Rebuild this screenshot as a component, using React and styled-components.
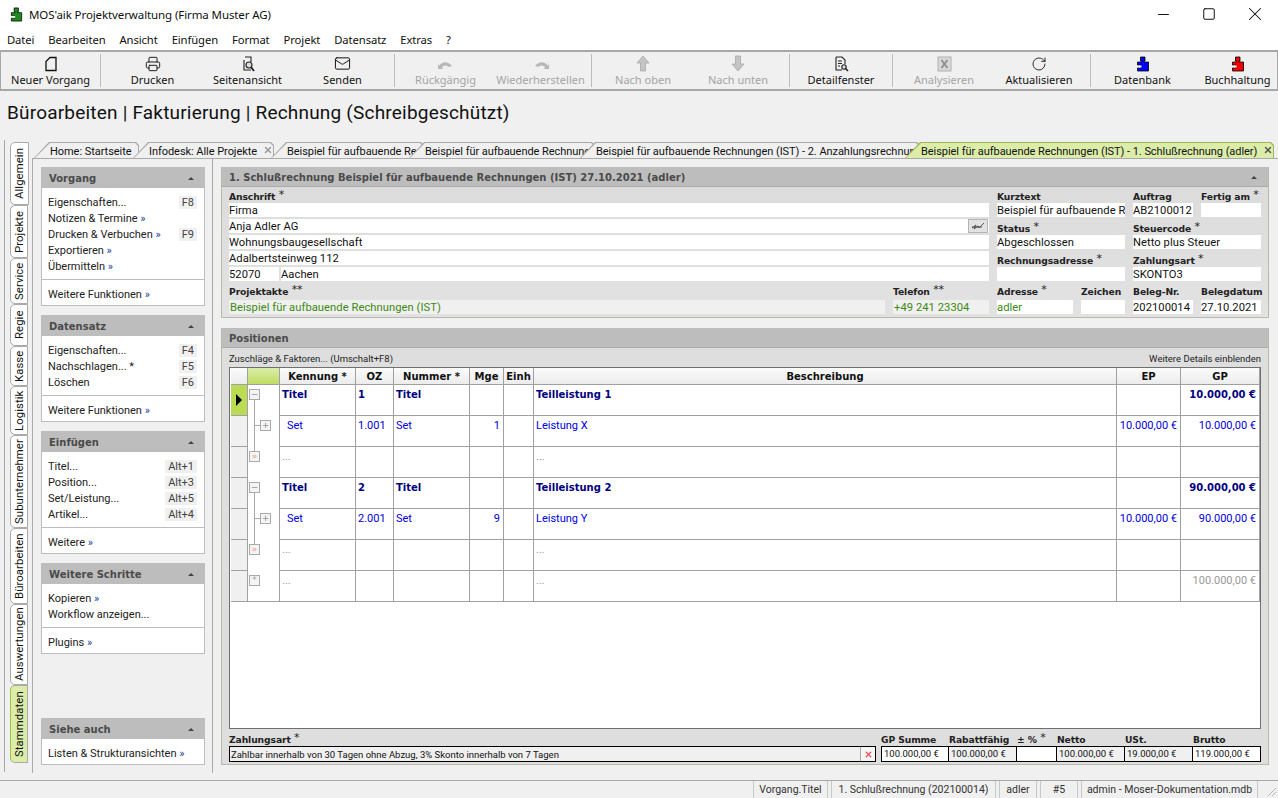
import React from "react";
import styled, { createGlobalStyle } from "styled-components";
import { Minus, Square, X, RotateCw, Mail, Printer } from "lucide-react";

const Global = createGlobalStyle`
  html, body { margin: 0; padding: 0; background: #f0f0f0; }
  body { font-family: "Noto Sans", "Open Sans", sans-serif; font-size: 11px; color: #111; overflow: hidden; }
  * { box-sizing: border-box; }
`;

const sansUi = `"Noto Sans", "Open Sans", sans-serif`;
const tahoma = `"Roboto", "Noto Sans", sans-serif`;
const tahomaBold = `"DejaVu Sans", sans-serif`;

// Window frame
const Page = styled.div`
  width: 1278px;
  height: 798px;
  display: flex;
  flex-direction: column;
  background: #f0f0f0;
`;

const TitleBar = styled.div`
  height: 30px;
  background: #fff;
  display: flex;
  align-items: center;
  padding: 0 0 2px 9px;
  font-family: ${sansUi};
  font-size: 11.5px;
`;

const TitleText = styled.span`
  margin-left: 5px;
  flex: 1;
  letter-spacing: -0.1px;
`;

const WinButtons = styled.div`
  display: flex;
  color: #111;
`;

const WinButton = styled.div`
  width: 46px;
  height: 28px;
  display: flex;
  align-items: center;
  justify-content: center;
`;

const MenuBar = styled.div`
  height: 20px;
  background: #fff;
  display: flex;
  gap: 14px;
  padding: 0 0 2px 7px;
  align-items: center;
  font-size: 11.25px;
  letter-spacing: -0.1px;
`;

// Toolbar
const Toolbar = styled.div`
  height: 41px;
  border: 1px solid #a8a8a8;
  border-width: 2px 1px 2px 1px;
  background: #f0f0f0;
  display: flex;
  align-items: stretch;
  padding: 2px 0;
`;

const ToolGroup = styled.div`
  display: flex;
  justify-content: center;
  width: ${(p) => p.$w}px;
  flex: none;
  padding-left: ${(p) => (p.$last ? "12px" : "0")};
  border-right: ${(p) => (p.$last ? "none" : "1px solid #bdbdbd")};
`;

const ToolButton = styled.div`
  width: 95px;
  flex: none;
  display: flex;
  flex-direction: column;
  align-items: center;
  justify-content: space-between;
  font-size: 11px;
  line-height: 15px;
  white-space: nowrap;
  color: ${(p) => (p.$off ? "#a4a4a4" : "#111")};
  padding-top: 1px;
`;

const ToolIcon = styled.div`
  height: 17px;
  display: flex;
  align-items: center;
`;

const PageHeading = styled.h1`
  margin: 0;
  height: 41px;
  padding-left: 7px;
  padding-top: 9px;
  font-family: ${tahoma};
  font-size: 19px;
  line-height: 26px;
  font-weight: 400;
  letter-spacing: 0.2px;
`;

const Workspace = styled.div`
  flex: 1;
  display: flex;
  min-height: 0;
`;

const LeftFrame = styled.div`
  width: 5px;
  flex: none;
  height: 632px;
  margin-top: 8px;
  border-right: 1px solid #a8a8a8;
`;

// Vertical module tabs
const SideTabs = styled.div`
  width: 23px;
  margin-left: 4px;
  padding-top: 10px;
  display: flex;
  flex-direction: column;
  flex: none;
`;

const SideTab = styled.div`
  height: ${(p) => p.$h}px;
  width: ${(p) => (p.$first ? "19px" : "18px")};
  margin-left: 1px;
  writing-mode: vertical-rl;
  transform: rotate(180deg);
  text-align: center;
  font-family: ${tahoma};
  font-size: 11.3px;
  line-height: 17px;
  letter-spacing: 0.1px;
  color: #111;
  background: ${(p) => (p.$active ? "#dcedaa" : "#fff")};
  border: 1px solid #aaa;
  border-right-color: ${(p) => (p.$active ? "#a3c243" : "#aaa")};
  border-radius: 0 5px 5px 0;
`;

const Stage = styled.div`
  flex: 1;
  display: flex;
  flex-direction: column;
  min-width: 0;
  padding-top: 10px;
`;

// Document tabs
const DocTabs = styled.div`
  height: 16px;
  flex: none;
  display: flex;
  padding-left: 2px;
`;

const DocTab = styled.div`
  width: ${(p) => p.$w}px;
  margin-right: ${(p) => p.$step - p.$w}px;
  flex: none;
  height: 16px;
  position: relative;
  padding-left: 16px;
  display: flex;
  align-items: center;
  justify-content: space-between;
  overflow: hidden;
  white-space: nowrap;
  font-family: ${tahoma};
  font-size: 11px;
  background: ${(p) => (p.$active ? "#9fb657" : "#aaa")};
  clip-path: polygon(15px 0, calc(100% - 3px) 0, 100% 3px, 100% 100%, 0 100%);
  &::before {
    content: "";
    position: absolute;
    inset: 1px 1px 0 1px;
    background: ${(p) => (p.$active ? "#dcedaa" : "#f0f0f0")};
    clip-path: polygon(15px 0, calc(100% - 3px) 0, 100% 3px, 100% 100%, 0 100%);
  }
`;

const DocTabLabel = styled.span`
  position: relative;
  padding-top: 3px;
  letter-spacing: -0.05px;
`;

const DocTabClose = styled.span`
  position: relative;
  display: flex;
  margin-right: 1px;
  color: ${(p) => (p.$active ? "#555" : "#999")};
`;

const StagePanel = styled.div`
  flex: none;
  height: 615px;
  display: flex;
  border-left: 1px solid #aaa;
  border-top: 1px solid #aaa;
`;

// Left task panels
const Sidebar = styled.div`
  width: 180px;
  flex: none;
  padding: 8px 7px 0 8px;
  border-right: 1px solid #aaa;
  display: flex;
  flex-direction: column;
`;

const TaskPanel = styled.section`
  margin-bottom: ${(p) => p.$gap || 9}px;
`;

const PanelHead = styled.div`
  height: 21px;
  background: #bdbdbd;
  display: flex;
  align-items: center;
  justify-content: space-between;
  padding: 2px 11px 0 8px;
  font-family: ${tahomaBold};
  font-weight: 700;
  font-size: 10px;
  color: #4a4a4a;
`;

const Caret = styled.span`
  width: 0;
  height: 0;
  border-left: 3px solid transparent;
  border-right: 3px solid transparent;
  border-bottom: 3px solid #444;
`;

const PanelBody = styled.div`
  background: #fff;
  border: 1px solid #bdbdbd;
  border-top: none;
`;

const PanelGroup = styled.div`
  padding: ${(p) => (p.$foot ? "6px 7px 3px 6px" : "6px 7px 5px 6px")};
  & + & {
    border-top: 1px solid #bdbdbd;
  }
`;

const TaskRow = styled.div`
  height: 16px;
  padding-top: 1px;
  line-height: 15px;
  display: flex;
  justify-content: space-between;
  align-items: center;
  font-family: ${tahoma};
  font-size: 11px;
  color: #222;
`;

const Key = styled.span`
  background: #f0f0f0;
  padding: 0 3px;
  margin-top: -1px;
  height: 13px;
  line-height: 14px;
  color: #444;
  font-size: 11px;
`;

const Raquo = styled.span`
  color: #1c3f94;
`;

const Spacer = styled.div`
  flex: 1;
`;

// Main column
const MainCol = styled.div`
  flex: 1;
  min-width: 0;
  padding: 8px 9px 0 8px;
  display: flex;
  flex-direction: column;
`;

const Section = styled.section`
  background: #dedede;
  display: flex;
  flex-direction: column;
  flex: ${(p) => (p.$grow ? 1 : "none")};
  height: ${(p) => (p.$h ? p.$h + "px" : "auto")};
  margin-bottom: ${(p) => p.$mb || 0}px;
  border: solid #b8b8b0;
  border-width: 0 1px 1px 1px;
`;

const SectionHead = styled.div`
  height: 20px;
  flex: none;
  background: #bdbdbd;
  border-bottom: 1px solid #aaa;
  display: flex;
  align-items: center;
  justify-content: space-between;
  padding: 2px 11px 0 7px;
  font-family: ${tahomaBold};
  font-weight: 700;
  font-size: 10px;
  color: #4a4a4a;
`;

// Form
const FormBody = styled.div`
  padding: 4px 7px 0 7px;
  display: grid;
  grid-template-columns: 760px 128px 128px;
  grid-template-rows: 92px auto;
  column-gap: 8px;
  background: linear-gradient(#dcdcdc, #e2e2e2);
  flex: 1;
`;

const FieldLabel = styled.div`
  height: 12px;
  line-height: 11px;
  font-family: ${tahomaBold};
  font-weight: 700;
  font-size: 9.2px;
  letter-spacing: -0.1px;
  white-space: nowrap;
  color: #222;
`;

const Star = styled.span`
  font-weight: 400;
  font-size: 11px;
  line-height: 0;
  position: relative;
  top: -2px;
`;

const Input = styled.div`
  height: 14px;
  line-height: 15px;
  background: ${(p) => (p.$ro ? "#f0f0f0" : "#fff")};
  font-family: ${tahoma};
  font-size: 11.2px;
  letter-spacing: 0.05px;
  padding-left: ${(p) => (p.$ro ? "1px" : "0")};
  color: ${(p) => (p.$green ? "#3c8a10" : "#111")};
  white-space: nowrap;
  overflow: hidden;
  position: relative;
`;

const Stack = styled.div`
  display: flex;
  flex-direction: column;
  & > div:not(:first-child) {
    margin-bottom: 2px;
  }
`;

const FieldStack = styled.div`
  display: flex;
  flex-direction: column;
  gap: 6px;
`;

const TopPair = styled.div`
  display: grid;
  grid-template-columns: 60px 60px;
  column-gap: 8px;
`;

const CityRow = styled.div`
  display: flex;
  gap: 2px;
`;

const Zip = styled(Input)`
  width: 50px;
`;

const City = styled(Input)`
  flex: 1;
`;

const PickButton = styled.span`
  position: absolute;
  right: 1px;
  top: 0;
  width: 20px;
  height: 14px;
  background: #e2e2e2;
  border: 1px solid #b4b4b4;
  display: flex;
  align-items: center;
  justify-content: center;
`;

const FormFoot = styled.div`
  grid-column: 1 / -1;
  display: grid;
  grid-template-columns: 656px 96px 76px 44px 60px 60px;
  column-gap: 8px;
  margin-top: 3px;
  align-content: start;
`;

const FootField = styled.div`
  display: flex;
  flex-direction: column;
  gap: 2px;
`;

// Positions
const PositionsBar = styled.div`
  height: 19px;
  display: flex;
  align-items: center;
  justify-content: space-between;
  padding: 2px 7px 0;
  font-family: ${tahoma};
  font-size: 9.5px;
  color: #222;
  flex: none;
`;

const GridFrame = styled.div`
  margin: 0 7px;
  flex: 1;
  background: #fff;
  border: 1px solid #707070;
  min-height: 0;
  padding-left: 1px;
  overflow: hidden;
`;

const Table = styled.table`
  border-collapse: separate;
  border-spacing: 0;
  table-layout: fixed;
  width: 1029px;
  font-family: ${tahoma};
  font-size: 11px;
`;

const Th = styled.th`
  height: 17px;
  padding: 0;
  font-family: ${tahomaBold};
  font-size: 10px;
  font-weight: 700;
  background: ${(p) => (p.$green ? "linear-gradient(#dcedaa, #bfdc62)" : "linear-gradient(#fbfbfb, #ececec)")};
  border-right: 1px solid #a0a0a0;
  border-bottom: 1px solid #a0a0a0;
  color: #111;
`;

const Td = styled.td`
  height: 31px;
  padding: 2px 3px 0 ${(p) => (p.$indent ? "7px" : "2px")};
  vertical-align: top;
  border-right: 1px solid #a0a0a0;
  border-bottom: 1px solid #a0a0a0;
  line-height: 15px;
  text-align: ${(p) => (p.$right ? "right" : "left")};
  color: ${(p) => p.$color || "#0000e0"};
  font-family: ${(p) => (p.$bold ? tahomaBold : "inherit")};
  font-weight: ${(p) => (p.$bold ? 700 : 400)};
  font-size: ${(p) => (p.$bold ? "10px" : "11px")};
  white-space: nowrap;
  overflow: hidden;
`;

const SelectCell = styled.td`
  padding: 0;
  border-right: 1px solid #a0a0a0;
  border-bottom: 1px solid #a0a0a0;
  background: ${(p) => (p.$current ? "#bcdb55" : "#f0f0f0")};
  text-align: center;
  vertical-align: top;
`;

const Pointer = styled.span`
  display: inline-block;
  margin-top: 9px;
  border-left: 6px solid #000;
  border-top: 6px solid transparent;
  border-bottom: 6px solid transparent;
`;

const TreeCell = styled.td`
  padding: 0;
  position: relative;
  border-right: 1px solid #a0a0a0;
  border-bottom: ${(p) => (p.$last ? "1px solid #a0a0a0" : "none")};
  background: #fff;
`;

const TreeLine = styled.span`
  position: absolute;
  left: ${(p) => p.$x}px;
  top: ${(p) => p.$y}px;
  width: ${(p) => p.$w || 1}px;
  height: ${(p) => p.$h || 1}px;
  background: #aaa;
`;

const TreeBox = styled.span`
  position: absolute;
  left: ${(p) => p.$x}px;
  top: 4px;
  width: 11px;
  height: 11px;
  background: #f4f4f4;
  border: 1px solid #aaa;
  font-size: 9px;
  line-height: 8px;
  text-align: center;
  color: ${(p) => p.$c || "#999"};
  font-family: ${tahomaBold};
`;

// Totals
const TotalsRow = styled.div`
  flex: none;
  height: 35px;
  padding: 5px 7px 0;
  display: grid;
  grid-template-columns: 647px 1fr;
  column-gap: 5px;
`;

const PayBox = styled.div`
  height: 16px;
  border: 1px solid #000;
  background: #f0f0f0;
  display: flex;
  align-items: center;
  font-family: ${tahoma};
  font-size: 9.5px;
  padding-left: 1px;
`;

const PayText = styled.span`
  flex: 1;
`;

const PayClear = styled.span`
  width: 15px;
  height: 14px;
  background: #f6f6f6;
  border-left: 1px solid #aaa;
  display: flex;
  align-items: center;
  justify-content: center;
  color: #e8505a;
`;

const TotalsGrid = styled.div`
  display: grid;
  grid-template-columns: 68px 68px 40px 68px 68px 68px;
`;

const TotalCell = styled.div`
  height: 16px;
  border: 1px solid #000;
  border-left-width: ${(p) => (p.$first ? "1px" : "0")};
  background: ${(p) => (p.$ro ? "#f0f0f0" : "#fff")};
  font-family: ${tahoma};
  font-size: 9.5px;
  line-height: 14px;
  padding-left: 2px;
  white-space: nowrap;
`;

// Status bar
const StatusBar = styled.div`
  height: 18px;
  flex: none;
  border-top: 1px solid #a8a8a8;
  display: flex;
  justify-content: flex-end;
  gap: 3px;
  padding-right: 20px;
  position: relative;
`;

const StatusCell = styled.div`
  width: ${(p) => p.$w}px;
  border: solid #c8c8c8;
  border-width: 0 1px;
  text-align: center;
  line-height: 17px;
  color: #333;
  font-family: ${tahoma};
  font-size: 10.5px;
  white-space: nowrap;
`;

const Grip = styled.svg`
  position: absolute;
  right: 1px;
  bottom: 1px;
`;

// Puzzle figure used as app logo and for the data toolbar buttons
const Puzzle = ({ color, size = 16 }) => (
  <svg width={size} height={size} viewBox="0 0 16 16">
    <path
      d="M5.5 1h4.5v4H9v1h4.5v9h-11v-3h3V9h-3V6h4V5h-1z"
      fill={color}
      stroke="#000"
      strokeWidth="0.8"
    />
    <rect x="4" y="9.5" width="2.5" height="2" fill="#fff" />
  </svg>
);

const PageIcon = () => (
  <svg width="14" height="16" viewBox="0 0 14 16" fill="none" stroke="#111" strokeWidth="1.3">
    <path d="M6 1.5h6v13H2V5.5z" />
  </svg>
);

const PreviewIcon = () => (
  <svg width="14" height="16" viewBox="0 0 14 16" fill="none" stroke="#222" strokeWidth="1.1">
    <path d="M4 1h6v5M3 4v10h7" />
    <circle cx="8" cy="9" r="3" fill="#ddd" />
    <path d="M10 11l3 4" strokeWidth="1.8" />
  </svg>
);

const UndoIcon = ({ flip }) => (
  <svg width="20" height="12" viewBox="0 0 20 12" style={flip ? { transform: "scaleX(-1)" } : undefined}>
    <path d="M3 8c3-5 9-5 13 0l-3 1c-3-2-5-2-7 0l1 2H2V5z" fill="#b8b8b8" />
  </svg>
);

const ArrowIcon = ({ down }) => (
  <svg width="14" height="17" viewBox="0 0 14 17" style={down ? { transform: "scaleY(-1)" } : undefined}>
    <path d="M7 1l6 7H9.5v8h-5V8H1z" fill="#c4c4c4" stroke="#aaa" strokeWidth="0.8" />
  </svg>
);

const DetailIcon = () => (
  <svg width="15" height="16" viewBox="0 0 15 16" fill="none" stroke="#222" strokeWidth="1.1">
    <path d="M2 1h6l3 3v4M2 1v13h6" />
    <path d="M4 5h4M4 7.5h4M4 10h2" strokeWidth="1" />
    <circle cx="10" cy="11" r="2.2" fill="#ddd" />
    <path d="M11.5 12.5l2.5 2.5" strokeWidth="1.6" />
  </svg>
);

const ExcelIcon = () => (
  <svg width="15" height="16" viewBox="0 0 15 16">
    <rect x="1" y="1" width="13" height="14" fill="#d8d8d8" stroke="#b0b0b0" />
    <path d="M4.5 4l6 8M10.5 4l-6 8" stroke="#8e8e8e" strokeWidth="1.8" />
  </svg>
);

const SignIcon = () => (
  <svg width="14" height="9" viewBox="0 0 14 9" fill="none" stroke="#444" strokeWidth="0.9">
    <path d="M1 6l4-3-2 4 4-3 1 2 5-5" />
    <path d="M1 5h10" />
  </svg>
);

const Req = ({ n = 1 }) => <Star> {"*".repeat(n)}</Star>;
const More = () => <Raquo> »</Raquo>;

const toolGroups = [
  { w: 100, tools: [{ label: "Neuer Vorgang", icon: <PageIcon /> }] },
  {
    w: 294,
    tools: [
      { label: "Drucken", icon: <Printer size={16} strokeWidth={1.4} /> },
      { label: "Seitenansicht", icon: <PreviewIcon /> },
      { label: "Senden", icon: <Mail size={17} strokeWidth={1.4} /> },
    ],
  },
  {
    w: 197,
    tools: [
      { label: "Rückgängig", icon: <UndoIcon />, off: true },
      { label: "Wiederherstellen", icon: <UndoIcon flip />, off: true },
    ],
  },
  {
    w: 198,
    tools: [
      { label: "Nach oben", icon: <ArrowIcon />, off: true },
      { label: "Nach unten", icon: <ArrowIcon down />, off: true },
    ],
  },
  { w: 103, tools: [{ label: "Detailfenster", icon: <DetailIcon /> }] },
  {
    w: 198,
    tools: [
      { label: "Analysieren", icon: <ExcelIcon />, off: true },
      { label: "Aktualisieren", icon: <RotateCw size={16} strokeWidth={1.3} /> },
    ],
  },
  {
    w: 186,
    last: true,
    tools: [
      { label: "Datenbank", icon: <Puzzle color="#0000f0" /> },
      { label: "Buchhaltung", icon: <Puzzle color="#f00000" /> },
    ],
  },
];

const sideTabs = [
  ["Allgemein", 63],
  ["Projekte", 53],
  ["Service", 46],
  ["Regie", 42],
  ["Kasse", 40],
  ["Logistik", 49],
  ["Subunternehmer", 93],
  ["Büroarbeiten", 76],
  ["Auswertungen", 81],
  ["Stammdaten", 78],
];

const docTabs = [
  { label: "Home: Startseite", w: 105, step: 99 },
  { label: "Infodesk: Alle Projekte", w: 141, step: 138, close: true },
  { label: "Beispiel für aufbauende Rechnungen (IST)", w: 153, step: 138 },
  { label: "Beispiel für aufbauende Rechnungen (IST)", w: 186, step: 171 },
  { label: "Beispiel für aufbauende Rechnungen (IST) - 2. Anzahlungsrechnung", w: 340, step: 325 },
  { label: "Beispiel für aufbauende Rechnungen (IST) - 1. Schlußrechnung (adler)", w: 369, step: 369, close: true, active: true },
];

const columns = [17, 32, 76, 38, 76, 34, 30, 583, 64, 79];

const rows = [
  { kind: "title", cells: ["Titel", "1", "Titel", "", "", "Teilleistung 1", "", "10.000,00 €"] },
  { kind: "set", cells: ["Set", "1.001", "Set", "1", "", "Leistung X", "10.000,00 €", "10.000,00 €"] },
  { kind: "more", cells: ["...", "", "", "", "", "...", "", ""] },
  { kind: "title", cells: ["Titel", "2", "Titel", "", "", "Teilleistung 2", "", "90.000,00 €"] },
  { kind: "set", cells: ["Set", "2.001", "Set", "9", "", "Leistung Y", "10.000,00 €", "90.000,00 €"] },
  { kind: "more", cells: ["...", "", "", "", "", "...", "", ""] },
  { kind: "sum", cells: ["...", "", "", "", "", "...", "", "100.000,00 €"] },
];

const Tree = ({ kind }) => (
  <TreeCell $last={kind === "sum"}>
    {kind === "title" && (
      <>
        <TreeBox $x={1}>−</TreeBox>
        <TreeLine $x={6} $y={15} $h={16} />
      </>
    )}
    {kind === "set" && (
      <>
        <TreeLine $x={6} $y={0} $h={31} />
        <TreeLine $x={6} $y={9} $w={6} />
        <TreeBox $x={12}>+</TreeBox>
      </>
    )}
    {kind === "more" && (
      <>
        <TreeLine $x={6} $y={0} $h={4} />
        <TreeBox $x={1} $c="#e8a080">»</TreeBox>
      </>
    )}
    {kind === "sum" && <TreeBox $x={1} $c="#b09a9a">*</TreeBox>}
  </TreeCell>
);

const cellColor = (kind, i) => {
  if (kind === "title") return "#000080";
  if (kind === "more") return "#b08ac0";
  if (kind === "sum") return i === 7 ? "#999" : "#b08ac0";
  return "#0000e0";
};

const App = () => (
  <Page>
    <Global />
    <TitleBar>
      <Puzzle color="#1e8a1e" size={15} />
      <TitleText>MOS'aik Projektverwaltung (Firma Muster AG)</TitleText>
      <WinButtons>
        <WinButton><Minus size={17} strokeWidth={1.4} /></WinButton>
        <WinButton><Square size={14} strokeWidth={1.7} /></WinButton>
        <WinButton><X size={22} strokeWidth={1.1} /></WinButton>
      </WinButtons>
    </TitleBar>
    <MenuBar>
      {["Datei", "Bearbeiten", "Ansicht", "Einfügen", "Format", "Projekt", "Datensatz", "Extras", "?"].map((m) => (
        <span key={m}>{m}</span>
      ))}
    </MenuBar>
    <Toolbar>
      {toolGroups.map((g, i) => (
        <ToolGroup key={i} $w={g.w} $last={g.last}>
          {g.tools.map((t) => (
            <ToolButton key={t.label} $off={t.off}>
              <ToolIcon>{t.icon}</ToolIcon>
              {t.label}
            </ToolButton>
          ))}
        </ToolGroup>
      ))}
    </Toolbar>
    <PageHeading>Büroarbeiten | Fakturierung | Rechnung (Schreibgeschützt)</PageHeading>
    <Workspace>
      <LeftFrame />
      <SideTabs>
        {sideTabs.map(([label, h], i) => (
          <SideTab key={label} $h={h} $active={label === "Stammdaten"} $first={i === 0}>
            {label}
          </SideTab>
        ))}
      </SideTabs>
      <Stage>
        <DocTabs>
          {docTabs.map((t, i) => (
            <DocTab key={i} $w={t.w} $step={t.step} $active={t.active}>
              <DocTabLabel>{t.label}</DocTabLabel>
              {t.close && (
                <DocTabClose $active={t.active}>
                  <X size={10} strokeWidth={3.5} />
                </DocTabClose>
              )}
            </DocTab>
          ))}
        </DocTabs>
        <StagePanel>
          <Sidebar>
            <TaskPanel>
              <PanelHead>Vorgang<Caret /></PanelHead>
              <PanelBody>
                <PanelGroup>
                  <TaskRow>Eigenschaften...<Key>F8</Key></TaskRow>
                  <TaskRow><span>Notizen &amp; Termine<More /></span></TaskRow>
                  <TaskRow><span>Drucken &amp; Verbuchen<More /></span><Key>F9</Key></TaskRow>
                  <TaskRow><span>Exportieren<More /></span></TaskRow>
                  <TaskRow><span>Übermitteln<More /></span></TaskRow>
                </PanelGroup>
                <PanelGroup $foot>
                  <TaskRow><span>Weitere Funktionen<More /></span></TaskRow>
                </PanelGroup>
              </PanelBody>
            </TaskPanel>
            <TaskPanel>
              <PanelHead>Datensatz<Caret /></PanelHead>
              <PanelBody>
                <PanelGroup>
                  <TaskRow>Eigenschaften...<Key>F4</Key></TaskRow>
                  <TaskRow><span>Nachschlagen... *</span><Key>F5</Key></TaskRow>
                  <TaskRow>Löschen<Key>F6</Key></TaskRow>
                </PanelGroup>
                <PanelGroup $foot>
                  <TaskRow><span>Weitere Funktionen<More /></span></TaskRow>
                </PanelGroup>
              </PanelBody>
            </TaskPanel>
            <TaskPanel>
              <PanelHead>Einfügen<Caret /></PanelHead>
              <PanelBody>
                <PanelGroup>
                  <TaskRow>Titel...<Key>Alt+1</Key></TaskRow>
                  <TaskRow>Position...<Key>Alt+3</Key></TaskRow>
                  <TaskRow>Set/Leistung...<Key>Alt+5</Key></TaskRow>
                  <TaskRow>Artikel...<Key>Alt+4</Key></TaskRow>
                </PanelGroup>
                <PanelGroup $foot>
                  <TaskRow><span>Weitere<More /></span></TaskRow>
                </PanelGroup>
              </PanelBody>
            </TaskPanel>
            <TaskPanel>
              <PanelHead>Weitere Schritte<Caret /></PanelHead>
              <PanelBody>
                <PanelGroup>
                  <TaskRow><span>Kopieren<More /></span></TaskRow>
                  <TaskRow>Workflow anzeigen...</TaskRow>
                </PanelGroup>
                <PanelGroup $foot>
                  <TaskRow><span>Plugins<More /></span></TaskRow>
                </PanelGroup>
              </PanelBody>
            </TaskPanel>
            <Spacer />
            <TaskPanel $gap={8}>
              <PanelHead>Siehe auch<Caret /></PanelHead>
              <PanelBody>
                <PanelGroup $foot>
                  <TaskRow><span>Listen &amp; Strukturansichten<More /></span></TaskRow>
                </PanelGroup>
              </PanelBody>
            </TaskPanel>
          </Sidebar>
          <MainCol>
            <Section $h={151} $mb={10}>
              <SectionHead>
                1. Schlußrechnung Beispiel für aufbauende Rechnungen (IST) 27.10.2021 (adler)
                <Caret />
              </SectionHead>
              <FormBody>
                <Stack>
                  <FieldLabel>Anschrift<Req /></FieldLabel>
                  <Input>Firma</Input>
                  <Input>Anja Adler AG<PickButton><SignIcon /></PickButton></Input>
                  <Input>Wohnungsbaugesellschaft</Input>
                  <Input>Adalbertsteinweg 112</Input>
                  <CityRow><Zip>52070</Zip><City>Aachen</City></CityRow>
                </Stack>
                <FieldStack>
                  <div><FieldLabel>Kurztext</FieldLabel><Input>Beispiel für aufbauende Rechnungen</Input></div>
                  <div><FieldLabel>Status<Req /></FieldLabel><Input>Abgeschlossen</Input></div>
                  <div><FieldLabel>Rechnungsadresse<Req /></FieldLabel><Input /></div>
                </FieldStack>
                <FieldStack>
                  <TopPair>
                    <div><FieldLabel>Auftrag</FieldLabel><Input>AB2100012</Input></div>
                    <div><FieldLabel>Fertig am<Req /></FieldLabel><Input /></div>
                  </TopPair>
                  <div><FieldLabel>Steuercode<Req /></FieldLabel><Input>Netto plus Steuer</Input></div>
                  <div><FieldLabel>Zahlungsart<Req /></FieldLabel><Input>SKONTO3</Input></div>
                </FieldStack>
                <FormFoot>
                  <FootField><FieldLabel>Projektakte<Req n={2} /></FieldLabel><Input $ro $green>Beispiel für aufbauende Rechnungen (IST)</Input></FootField>
                  <FootField><FieldLabel>Telefon<Req n={2} /></FieldLabel><Input $ro $green>+49 241 23304</Input></FootField>
                  <FootField><FieldLabel>Adresse<Req /></FieldLabel><Input $green>adler</Input></FootField>
                  <FootField><FieldLabel>Zeichen</FieldLabel><Input /></FootField>
                  <FootField><FieldLabel>Beleg-Nr.</FieldLabel><Input>202100014</Input></FootField>
                  <FootField><FieldLabel>Belegdatum</FieldLabel><Input>27.10.2021</Input></FootField>
                </FormFoot>
              </FormBody>
            </Section>
            <Section $grow $mb={8}>
              <SectionHead>Positionen</SectionHead>
              <PositionsBar>
                <span>Zuschläge &amp; Faktoren... (Umschalt+F8)</span>
                <span>Weitere Details einblenden</span>
              </PositionsBar>
              <GridFrame>
                <Table>
                  <colgroup>
                    {columns.map((w, i) => <col key={i} width={w} />)}
                  </colgroup>
                  <thead>
                    <tr>
                      <Th />
                      <Th $green />
                      <Th>Kennung *</Th>
                      <Th>OZ</Th>
                      <Th>Nummer *</Th>
                      <Th>Mge</Th>
                      <Th>Einh</Th>
                      <Th>Beschreibung</Th>
                      <Th>EP</Th>
                      <Th>GP</Th>
                    </tr>
                  </thead>
                  <tbody>
                    {rows.map((r, ri) => (
                      <tr key={ri}>
                        <SelectCell $current={ri === 0}>{ri === 0 && <Pointer />}</SelectCell>
                        <Tree kind={r.kind} />
                        {r.cells.map((c, i) => (
                          <Td
                            key={i}
                            $bold={r.kind === "title"}
                            $right={i === 3 || i >= 6}
                            $indent={i === 0 && r.kind === "set"}
                            $color={cellColor(r.kind, i)}
                          >
                            {c}
                          </Td>
                        ))}
                      </tr>
                    ))}
                  </tbody>
                </Table>
              </GridFrame>
              <TotalsRow>
                <div>
                  <FieldLabel>Zahlungsart<Req /></FieldLabel>
                  <PayBox>
                    <PayText>Zahlbar innerhalb von 30 Tagen ohne Abzug, 3% Skonto innerhalb von 7 Tagen</PayText>
                    <PayClear><X size={9} strokeWidth={3.5} /></PayClear>
                  </PayBox>
                </div>
                <TotalsGrid>
                  {[
                    ["GP Summe", "100.000,00 €"],
                    ["Rabattfähig", "100.000,00 €", true],
                    ["± %", "", false, true],
                    ["Netto", "100.000,00 €", true],
                    ["USt.", "19.000,00 €", true],
                    ["Brutto", "119.000,00 €"],
                  ].map(([label, value, ro, req], i) => (
                    <div key={label}>
                      <FieldLabel>{label}{req && <Req />}</FieldLabel>
                      <TotalCell $first={i === 0} $ro={ro}>{value}</TotalCell>
                    </div>
                  ))}
                </TotalsGrid>
              </TotalsRow>
            </Section>
          </MainCol>
        </StagePanel>
      </Stage>
    </Workspace>
    <StatusBar>
      <StatusCell $w={75}>Vorgang.Titel</StatusCell>
      <StatusCell $w={165}>1. Schlußrechnung (202100014)</StatusCell>
      <StatusCell $w={38}>adler</StatusCell>
      <StatusCell $w={38}>#5</StatusCell>
      <StatusCell $w={177}>admin - Moser-Dokumentation.mdb</StatusCell>
      <Grip width="12" height="12" viewBox="0 0 12 12" stroke="#bbb">
        <path d="M11 3L3 11M11 7L7 11" />
      </Grip>
    </StatusBar>
  </Page>
);

export default App;
